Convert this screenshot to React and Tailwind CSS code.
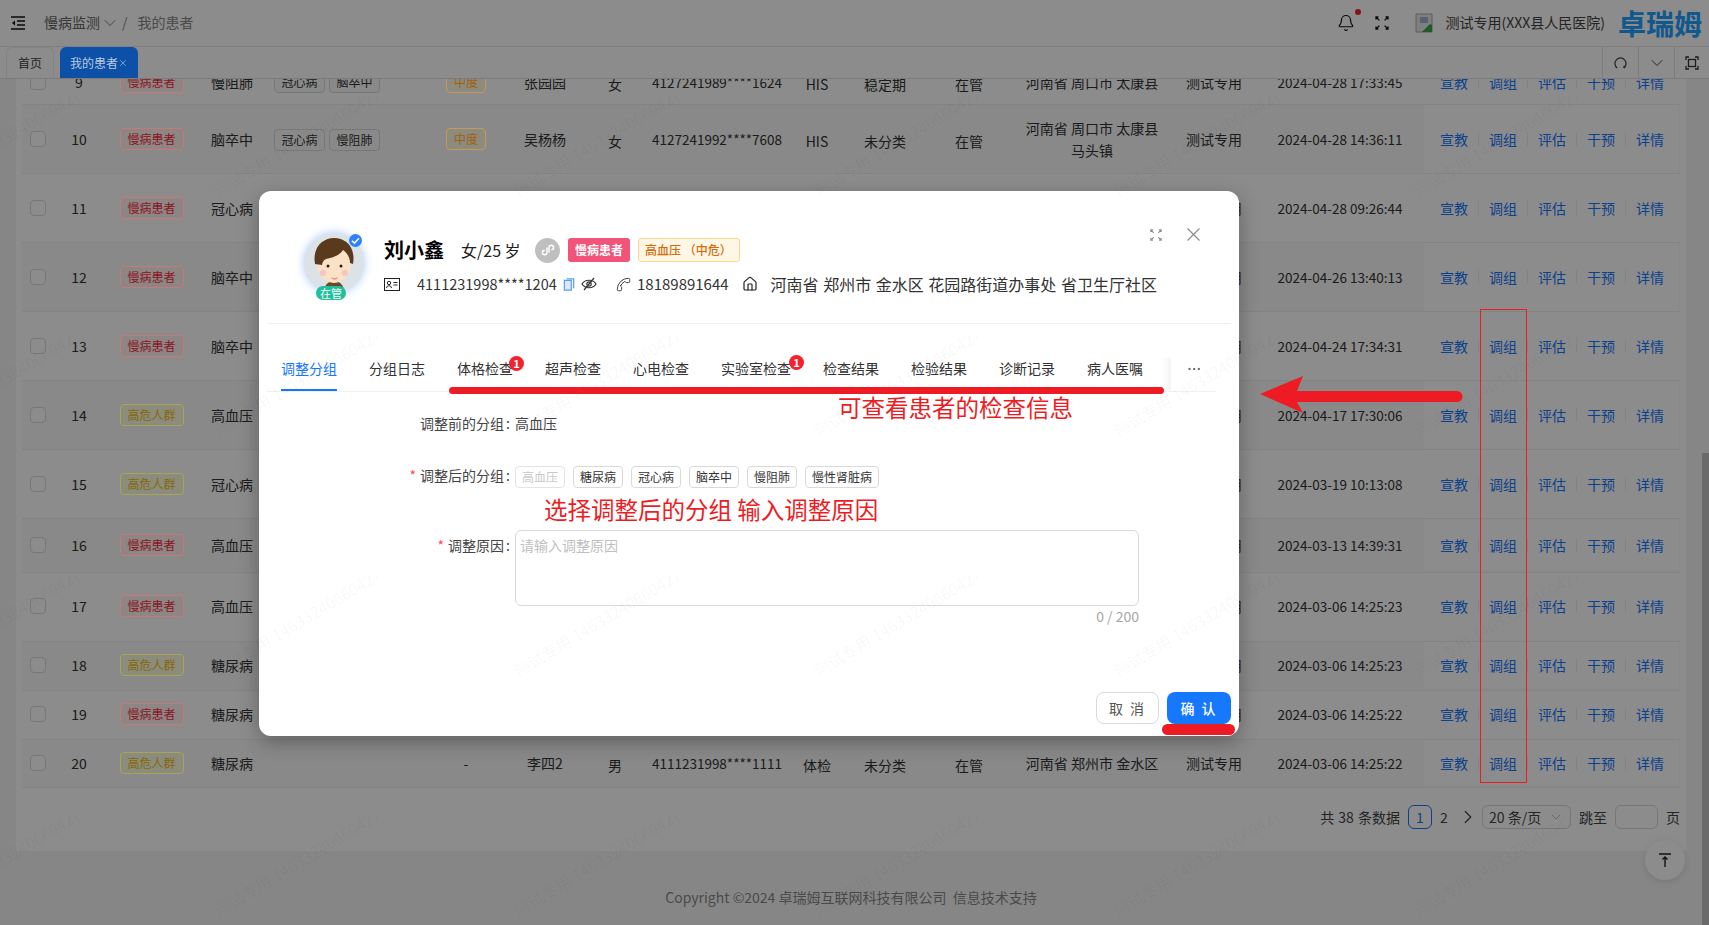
import { Bell, ChevronDown, ChevronRight, X, House, Phone, Ellipsis } from "lucide-react";

const rows = [
  { n: 9, h: "h-[46px]", type: "慢病患者", dis: "慢阻肺", tags: ["冠心病", "脑卒中"], sev: "中度", name: "张园园", sex: "女", id: "4127241989****1624", src: "HIS", st: "稳定期", addr: ["河南省 周口市 太康县"], date: "2024-04-28 17:33:45" },
  { n: 10, h: "h-[69px]", type: "慢病患者", dis: "脑卒中", tags: ["冠心病", "慢阻肺"], sev: "中度", name: "吴杨杨", sex: "女", id: "4127241992****7608", src: "HIS", st: "未分类", addr: ["河南省 周口市 太康县", "马头镇"], date: "2024-04-28 14:36:11" },
  { n: 11, h: "h-[69px]", type: "慢病患者", dis: "冠心病", tags: [], sev: "", name: "", sex: "", id: "", src: "", st: "", addr: [], date: "2024-04-28 09:26:44" },
  { n: 12, h: "h-[69px]", type: "慢病患者", dis: "脑卒中", tags: [], sev: "", name: "", sex: "", id: "", src: "", st: "", addr: [], date: "2024-04-26 13:40:13" },
  { n: 13, h: "h-[69px]", type: "慢病患者", dis: "脑卒中", tags: [], sev: "", name: "", sex: "", id: "", src: "", st: "", addr: [], date: "2024-04-24 17:34:31" },
  { n: 14, h: "h-[69px]", type: "高危人群", dis: "高血压", tags: [], sev: "", name: "", sex: "", id: "", src: "", st: "", addr: [], date: "2024-04-17 17:30:06" },
  { n: 15, h: "h-[69px]", type: "高危人群", dis: "冠心病", tags: [], sev: "", name: "", sex: "", id: "", src: "", st: "", addr: [], date: "2024-03-19 10:13:08" },
  { n: 16, h: "h-[54px] pb-[2px]", type: "慢病患者", dis: "高血压", tags: [], sev: "", name: "", sex: "", id: "", src: "", st: "", addr: [], date: "2024-03-13 14:39:31" },
  { n: 17, h: "h-[69px] pb-[2px]", type: "慢病患者", dis: "高血压", tags: [], sev: "", name: "", sex: "", id: "", src: "", st: "", addr: [], date: "2024-03-06 14:25:23" },
  { n: 18, h: "h-[49px] pb-[2px]", type: "高危人群", dis: "糖尿病", tags: [], sev: "", name: "", sex: "", id: "", src: "", st: "", addr: [], date: "2024-03-06 14:25:23" },
  { n: 19, h: "h-[49px] pb-[2px]", type: "慢病患者", dis: "糖尿病", tags: [], sev: "", name: "", sex: "", id: "", src: "", st: "", addr: [], date: "2024-03-06 14:25:22" },
  { n: 20, h: "h-[48px] pb-[2px]", type: "高危人群", dis: "糖尿病", tags: [], sev: "-", name: "李四2", sex: "男", id: "4111231998****1111", src: "体检", st: "未分类", addr: ["河南省 郑州市 金水区"], date: "2024-03-06 14:25:22" },
];

const ops = ["宣教", "调组", "评估", "干预", "详情"];
const modalTabs = ["分组日志", "体格检查", "超声检查", "心电检查", "实验室检查", "检查结果", "检验结果", "诊断记录", "病人医嘱"];
const groups = ["糖尿病", "冠心病", "脑卒中", "慢阻肺", "慢性肾脏病"];
const tiles = Array.from({ length: 35 }, (_, i) => i);

function ExpandIcon({ className }) {
  return (
    <svg viewBox="0 0 14 14" className={className} fill="none" stroke="currentColor" strokeWidth="1.3">
      <path d="M1 1l3.4 3.4M1 3.4V1h2.4M13 1L9.6 4.4M13 3.4V1h-2.4M1 13l3.4-3.4M1 10.6V13h2.4M13 13L9.6 9.6M13 10.6V13h-2.4" />
    </svg>
  );
}

function Row({ row, even }) {
  const hazard = row.type === "高危人群";
  return (
    <div className={`grid grid-cols-[32px_50px_95px_65px_164px_76px_82px_58px_146px_54px_82px_86px_160px_84px_168px_255px] items-center border-b border-[#eeeeee] text-[14px] leading-[22px] text-[#333] ${row.h} ${even ? "bg-[#f9f9f9]" : "bg-white"}`}>
      <div className="flex justify-center">
        <span className="h-4 w-4 rounded-[4px] border border-[#d9d9d9] bg-white" />
      </div>
      <div className="text-center">{row.n}</div>
      <div className="flex justify-center">
        <span className={`relative z-[11] flex h-[22px] w-[64px] items-center justify-center rounded-[4px] border text-[12px] ${hazard ? "border-[#a8a458] bg-[#8c8c7c] text-[#85680a]" : "border-[#c47a7a] bg-[#8e8585] text-[#8a1420]"}`}>
          {row.type}
        </span>
      </div>
      <div className="pl-3">{row.dis}</div>
      <div className="mt-px flex gap-1 pl-[10px]">
        {row.tags.map((t) => (
          <span key={t} className="flex h-[22px] w-[51px] items-center justify-center rounded-[4px] border border-[#d9d9d9] bg-[#fafafa] text-[12px]">{t}</span>
        ))}
      </div>
      <div className="flex justify-center">
        {row.sev === "中度" ? (
          <span className="relative z-[11] flex h-[22px] w-[40px] items-center justify-center rounded-[4px] border border-[#c49a5a] bg-[#8d8a7e] text-[12px] text-[#a0620c]">中度</span>
        ) : row.sev}
      </div>
      <div className="text-center">{row.name}</div>
      <div className="pt-1 text-center">{row.sex}</div>
      <div className="text-center text-[13.5px]">{row.id}</div>
      <div className="pt-1 text-center">{row.src}</div>
      <div className="pt-1 text-center">{row.st}</div>
      <div className="pt-1 text-center">{row.id ? "在管" : ""}</div>
      <div className="text-center">
        {row.addr.map((a) => <div key={a}>{a}</div>)}
      </div>
      <div className="text-center">测试专用</div>
      <div className="text-center text-[13.5px]">{row.date}</div>
      <div className="flex h-full items-center gap-[10px] bg-white pl-4 text-[#1677ff]">
        {ops.map((o, i) => (
          <div key={o} className="flex items-center gap-[10px]">
            <span className="w-[28px]">{o}</span>
            {i < 4 && <span className="h-[14px] w-px bg-[#eeeeee]" />}
          </div>
        ))}
      </div>
    </div>
  );
}

function Avatar() {
  return (
    <div className="relative h-[60px] w-[60px] rounded-full bg-[#dbe2e8] shadow-[0_0_10px_#a9c8ff]">
      <svg viewBox="0 0 60 60" className="h-[60px] w-[60px]">
        <path d="M20 56c2-6 6-8 10-8s8 2 10 8z" fill="#6b4a2a" />
        <ellipse cx="30" cy="31" rx="17" ry="19" fill="#fbe2c6" />
        <path d="M11 31C8 13 20 5 30 5c11 0 22 8 19 26l-3-1c0-6-3-10-7-13-3 5-9 7-13 8-5 1-7 2-8 7z" fill="#5a3a1c" />
        <circle cx="24" cy="33" r="1.5" fill="#222" />
        <circle cx="37" cy="33" r="1.5" fill="#222" />
        <circle cx="19" cy="40" r="3.2" fill="#f7c6c0" />
        <circle cx="41" cy="40" r="3.2" fill="#f7c6c0" />
        <path d="M27 44c1.500 1.500 5 1.500 7 0-1 3.500-6 3.500-7 0z" fill="#ea8f8f" />
      </svg>
      <span className="absolute left-[12px] top-[53px] flex h-[14px] w-[30px] items-center justify-center rounded-full bg-[#1fc09a] text-[11px] leading-[14px] text-white">在管</span>
      <span className="absolute left-[45px] top-[1px] flex h-[13px] w-[13px] items-center justify-center rounded-full bg-[#2f80ff]">
        <svg viewBox="0 0 13 13" className="h-[13px] w-[13px]" fill="none" stroke="white" strokeWidth="1.5"><path d="M3 6.800l2.400 2.300 4.600-4.800" /></svg>
      </span>
    </div>
  );
}

function PatientModal() {
  return (
    <div className="absolute left-[259px] top-[191px] z-20 flex h-[545px] w-[980px] flex-col rounded-xl bg-white px-2 pb-3 shadow-[0_6px_20px_rgba(0,0,0,0.3)]">
      <div className="absolute right-[39px] top-[37px] flex items-center gap-[25px] text-[#8c8c8c]">
        <ExpandIcon className="h-3 w-3" />
        <svg viewBox="0 0 13 13" className="h-[13px] w-[13px]" fill="none" stroke="currentColor" strokeWidth="1.200"><path d="M0.500 0.500l12 12M12.500 0.500l-12 12" /></svg>
      </div>

      <div className="flex h-[133px] border-b border-[#f0f0f0] pl-[37px] pt-[42px]">
        <Avatar />
        <div className="ml-5 mt-1">
          <div className="flex h-[26px] items-center">
            <span className="w-[77px] text-[20px] font-bold leading-[26px] text-black">刘小鑫</span>
            <span className="w-[74px] text-[16px] leading-[26px] text-[#222]">女/25 岁</span>
            <span className="flex h-[25px] w-[25px] items-center justify-center rounded-full bg-[#bfbfbf]">
              <svg viewBox="0 0 16 16" className="h-4 w-4" fill="none" stroke="white" strokeWidth="1.4"><path d="M7 5.500v5a2.300 2.300 0 1 1-2.400-2.300M9 10.500v-5a2.300 2.300 0 1 1 2.400 2.300" /></svg>
            </span>
            <span className="ml-[8px] flex h-6 w-[62px] items-center justify-center rounded-[3px] bg-[#f15478] text-[12px] font-bold text-white">慢病患者</span>
            <span className="ml-2 flex h-6 w-[102px] items-center rounded-[3px] border border-[#ffd591] bg-[#fff7e6] pl-[6px] text-[12px] font-medium text-[#d46b08]">高血压 （中危）</span>
          </div>
          <div className="mt-2 flex h-[26px] items-center text-[16px] leading-[26px] text-[#333]">
            <svg viewBox="0 0 16 13" className="h-[13px] w-4" fill="none" stroke="#222" strokeWidth="1"><rect x="0.500" y="0.500" width="15" height="12" /><circle cx="5" cy="5" r="1.700" /><path d="M2.500 10c0-3 5-3 5 0M9.500 4.500h4M9.500 7h4" /></svg>
            <span className="ml-[17px] w-[140px] text-[14.5px]">4111231998****1204</span>
            <svg viewBox="0 0 12 14" className="ml-[6px] h-[13px] w-[12px]" fill="#dbe9ff" stroke="#5a9bff" strokeWidth="1.300"><path d="M3.500 1H11v10" fill="none" /><path d="M1 2.500h7.500V13H1z" /></svg>
            <svg viewBox="0 0 16 16" className="ml-[6px] h-4 w-4" fill="none" stroke="#333" strokeWidth="1.200"><path d="M1 8c3-5 11-5 14 0-3 5-11 5-14 0z" /><circle cx="8" cy="8" r="2.200" /><path d="M3 14L13 2" /></svg>
            <Phone className="ml-[19px] h-[15px] w-[15px] rotate-90 text-[#333]" strokeWidth={1.5} />
            <span className="ml-[6px] text-[15px]">18189891644</span>
            <House className="ml-[13px] h-4 w-4 text-[#222]" strokeWidth={1.8} />
            <span className="ml-[13px] [word-spacing:1px]">河南省 郑州市 金水区 花园路街道办事处 省卫生厅社区</span>
          </div>
        </div>
      </div>

      <div className="mr-[15px] flex h-[68px] items-end border-b border-[#f0f0f0] text-[14px] leading-[22px] text-[#333]">
        <div className="flex flex-1 items-end gap-8 overflow-hidden pl-[14px] shadow-[inset_-12px_0_8px_-8px_rgba(0,0,0,0.05)]">
          <span className="border-b-2 border-[#1677ff] pb-[10px] text-[#1677ff]">调整分组</span>
          {modalTabs.map((t) => (
            <span key={t} className="pb-3">{t}</span>
          ))}
        </div>
        <div className="flex w-[45px] justify-center pb-[14px]">
          <Ellipsis className="h-4 w-4 text-[#555]" strokeWidth={1.5} />
        </div>
      </div>

      <div className="pt-[21px] text-[14px] leading-[22px] text-[#444]">
        <div className="flex -translate-y-px">
          <div className="w-[243px] text-right">调整前的分组<span className="ml-[2px]">:</span></div>
          <div className="ml-[5px]">高血压</div>
        </div>
        <div className="mt-[31px] flex items-center">
          <div className="w-[243px] -translate-y-[2px] text-right"><span className="mr-[4px] text-[#ff4d4f]">*</span>调整后的分组<span className="ml-[2px]">:</span></div>
          <div className="ml-[5px] flex gap-2 text-[12px]">
            <span className="flex h-[22px] w-[50px] items-center justify-center rounded-[4px] border border-[#e3e3e3] text-[#c9c9c9]">高血压</span>
            {groups.map((g) => (
              <span key={g} className="flex h-[22px] items-center justify-center rounded-[4px] border border-[#d9d9d9] px-[6px] text-[#333]">{g}</span>
            ))}
          </div>
        </div>
        <div className="mt-[42px] flex">
          <div className="w-[243px] pt-1 text-right"><span className="mr-[4px] text-[#ff4d4f]">*</span>调整原因<span className="ml-[2px]">:</span></div>
          <div className="ml-[5px]">
            <div className="h-[76px] w-[624px] rounded-[6px] border border-[#d9d9d9] px-1 pt-[3px] text-[#bfbfbf]">请输入调整原因</div>
            <div className="-mt-px text-right text-[#a6a6a6]">0 / 200</div>
          </div>
        </div>
      </div>

      <div className="mt-auto flex justify-end gap-2">
        <button className="h-8 w-[63px] rounded-lg border border-[#d9d9d9] text-[14px] tracking-[2px] text-[#555]">取 消</button>
        <button className="h-8 w-[64px] rounded-lg bg-[#1677ff] text-[14px] font-medium tracking-[2px] text-white">确 认</button>
      </div>
    </div>
  );
}

export default function App() {
  return (
    <div className="relative flex h-[925px] w-[1709px] flex-col overflow-hidden bg-[#f5f5f5] font-['Noto_Sans_CJK_SC',sans-serif]">
      <header className="flex h-[47px] items-center border-b border-[#e8e8e8] bg-white pl-[10px] text-[14px] text-[#666]">
        <svg viewBox="0 0 16 16" className="h-4 w-4" fill="none" stroke="#111" strokeWidth="1.400"><path d="M1 2h14M7 6h8M7 10h8M1 14h14" /><path d="M5 5.500L2 8l3 2.500z" fill="#111" stroke="none" /></svg>
        <span className="ml-[18px] -translate-y-px">慢病监测</span>
        <ChevronDown className="h-5 w-5" strokeWidth={1} />
        <span className="ml-[2px] -translate-y-px text-[#888]">/</span>
        <span className="ml-[10px] -translate-y-px text-[#888]">我的患者</span>
        <div className="ml-auto flex items-center">
          <div className="relative">
            <Bell className="h-[18px] w-[18px] text-[#111]" strokeWidth={1.6} />
            <span className="absolute -right-[6px] -top-[5px] h-[6px] w-[6px] rounded-full bg-[#f5222d]" />
          </div>
          <ExpandIcon className="ml-[20px] h-[14px] w-[14px] text-[#111]" />
          <svg viewBox="0 0 20 20" className="ml-[25px] h-5 w-5"><path d="M2 1h16v18H2z" fill="#e8e8e8" stroke="#aaa" /><path d="M6 4h8v6H6z" fill="#9cb3d6" /><path d="M8 19l8-8 2 1v7z" fill="#3fa34d" /></svg>
          <span className="ml-[11px] -translate-y-px text-[#444]">测试专用(XXX县人民医院)</span>
          <span className="ml-[13px] mr-[7px] text-[28px] font-bold leading-[30px] text-[#20a0ff]">卓瑞姆</span>
        </div>
      </header>

      <div className="flex h-[32px] border-b border-[#e0e0e0] bg-white pl-[6px] text-[12px]">
        <div className="flex h-[31px] w-[48px] items-center justify-center rounded-t-md border border-b-0 border-[#eeeeee] text-[#444]">首页</div>
        <div className="relative z-[11] ml-[6px] flex h-[31px] w-[78px] items-center justify-center rounded-t-md bg-[#0d50a8] text-[#b8c8dc]">
          我的患者<X className="h-[10px] w-[10px]" strokeWidth={1.5} />
        </div>
        <div className="ml-auto flex text-[#444]">
          <div className="flex w-[36px] items-center justify-center border-l border-[#e0e0e0]">
            <svg viewBox="0 0 14 16" className="h-[15px] w-[13px]" fill="none" stroke="#444" strokeWidth="1.300"><path d="M3.500 14a6 6 0 1 1 7 0M10.500 14l.5-2.500" /></svg>
          </div>
          <div className="flex w-[36px] items-center justify-center border-l border-[#e0e0e0]">
            <ChevronDown className="h-5 w-5" strokeWidth={1.2} />
          </div>
          <div className="flex w-[35px] items-center justify-center border-l border-[#e0e0e0]">
            <svg viewBox="0 0 14 14" className="h-[14px] w-[14px]" fill="none" stroke="#333" strokeWidth="1.300"><path d="M1 4V1h3M10 1h3v3M1 10v3h3M10 13h3v-3" /><rect x="3.500" y="3.500" width="7" height="7" /></svg>
          </div>
        </div>
      </div>

      <div className="flex min-h-0 flex-1">
        <div className="flex min-w-0 flex-1 flex-col px-4">
          <div className="h-[772px] overflow-hidden bg-white px-[6px]">
            <div className="-mt-[20px]">
              {rows.map((row) => <Row key={row.n} row={row} even={row.n % 2 === 0} />)}
            </div>
            <div className="flex items-center justify-end pt-[17px] text-[14px] leading-6 text-[#444]">
              <span className="[word-spacing:1px]">共 38 条数据</span>
              <span className="ml-2 flex h-6 w-6 items-center justify-center rounded-[6px] border border-[#1677ff] text-[#1677ff]">1</span>
              <span className="flex h-6 w-6 items-center justify-center">2</span>
              <span className="flex h-6 w-6 items-center justify-center"><ChevronRight className="h-[22px] w-[22px]" strokeWidth={1.3} /></span>
              <span className="ml-[2px] flex h-6 w-[89px] items-center justify-between rounded-[6px] border border-[#d9d9d9] px-[6px]">
                20 条/页<ChevronDown className="h-4 w-4 text-[#bfbfbf]" strokeWidth={1.5} />
              </span>
              <span className="ml-2">跳至</span>
              <span className="ml-2 h-6 w-[43px] rounded-[6px] border border-[#d9d9d9]" />
              <span className="ml-2">页</span>
            </div>
          </div>
          <footer className="flex flex-1 justify-center pt-[35px] text-[14px] leading-[22px] text-[#888]">
            Copyright ©2024 卓瑞姆互联网科技有限公司&nbsp; 信息技术支持
          </footer>
        </div>
        <div className="flex w-[7px] flex-col justify-end">
          <div className="h-[472px] bg-[#c1c1c1]" />
        </div>
      </div>

      <div className="absolute bottom-[45px] left-[1645px] flex h-10 w-10 items-center justify-center rounded-full bg-white shadow-[0_2px_8px_rgba(0,0,0,0.12)]">
        <svg viewBox="0 0 16 16" className="h-4 w-4" fill="none" stroke="#222" strokeWidth="1.400"><path d="M2 2h12M8 15V5M5.500 7.500L8 5l2.500 2.500" /></svg>
      </div>

      <div className="absolute inset-0 z-10 bg-black/45" />
      <PatientModal />

      <div className="pointer-events-none absolute -left-[210px] -top-[144px] z-30 flex w-[2100px] flex-wrap">
        {tiles.map((i) => (
          <div key={i} className="relative h-[240px] w-[300px] overflow-hidden">
            <span className="absolute left-[130px] top-[84px] origin-[0_100%] -rotate-[31deg] whitespace-nowrap text-[16px] leading-[20px] text-black/[0.04]">测试专用 146332406604274</span>
          </div>
        ))}
      </div>

      <span className="absolute left-[509px] top-[356px] z-40 flex h-[15px] w-[15px] items-center justify-center rounded-full bg-[#f5222d] text-[11px] font-bold leading-none text-white">1</span>
      <span className="absolute left-[789px] top-[355px] z-40 flex h-[15px] w-[15px] items-center justify-center rounded-full bg-[#f5222d] text-[11px] font-bold leading-none text-white">1</span>
      <div className="absolute left-[449px] top-[387px] z-40 h-[7px] w-[715px] rounded-full bg-[#ed1c24]" />
      <div className="absolute left-[838px] top-[389px] z-40 text-[23.5px] leading-[36px] text-[#ed1c24]">可查看患者的检查信息</div>
      <div className="absolute left-[544px] top-[491px] z-40 text-[23.5px] leading-[36px] text-[#ed1c24]">选择调整后的分组 输入调整原因</div>
      <div className="absolute left-[1162px] top-[724px] z-40 h-[11px] w-[73px] rounded-full bg-[#ed1c24]" />
      <div className="absolute left-[1480px] top-[309px] z-40 h-[474px] w-[47px] border border-[#ed1c24]" />
      <svg className="absolute left-[1258px] top-[374px] z-40 h-[42px] w-[206px]" viewBox="0 0 206 42">
        <path d="M2 20L45 2l-6 15h160a5.500 5.500 0 0 1 0 11H39l6 11z" fill="#ed1c24" />
      </svg>
    </div>
  );
}
